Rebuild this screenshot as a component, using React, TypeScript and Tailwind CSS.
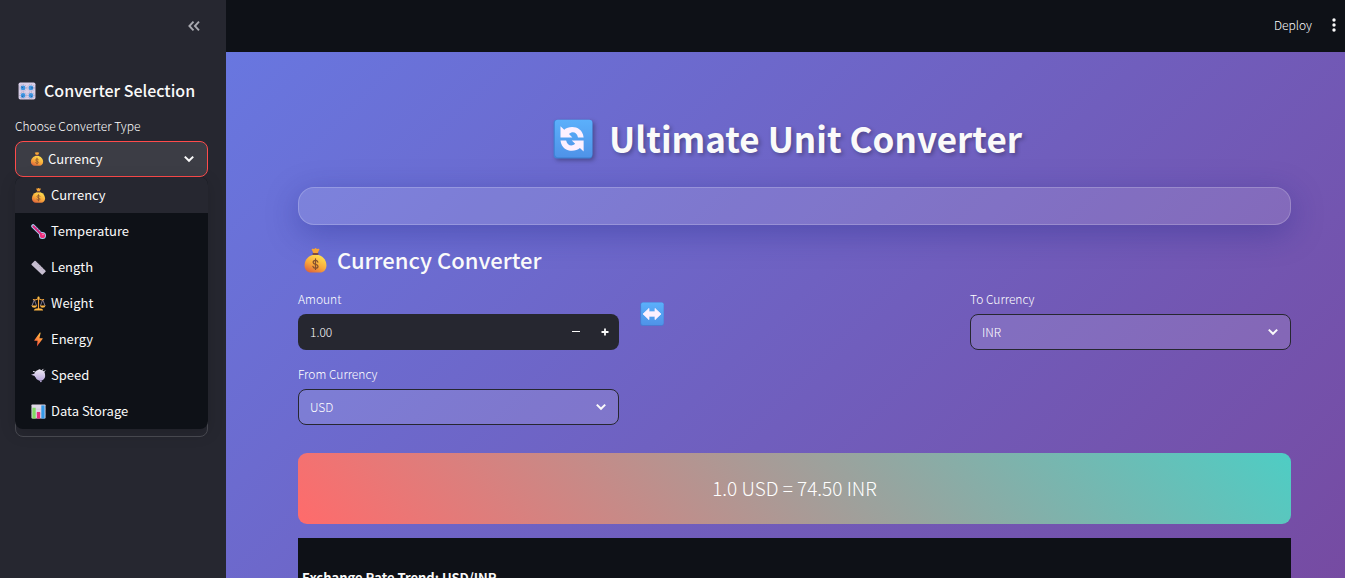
import { useState } from "react";
import type { ReactNode } from "react";

function Svg({ className, children }: { className: string; children: ReactNode }) {
  return (
    <svg viewBox="0 0 32 32" className={`shrink-0 ${className}`} aria-hidden="true">
      {children}
    </svg>
  );
}

function MoneyBag({ className }: { className: string }) {
  return (
    <Svg className={className}>
      <defs>
        <linearGradient id="bag" x1="0.8" y1="0.1" x2="0.3" y2="1">
          <stop offset="0" stopColor="#ffdc4e" />
          <stop offset="0.55" stopColor="#f9a83a" />
          <stop offset="1" stopColor="#e0693c" />
        </linearGradient>
      </defs>
      <path d="M11 1.500c1.500-1.300 2.600.5 3.800-.6 1-1 1.600-1 2.600 0 1.200 1.100 2.300-.7 3.700.600L18.500 7h-5z" fill="#f7a436" />
      <path d="M12 9C5 11 2 17 2 22.500 2 28 6 31.500 10 31.500h12c4 0 8-3.500 8-9C30 17 27 11 20 9z" fill="url(#bag)" />
      <rect x="12" y="6.500" width="8" height="2.400" rx="1.200" fill="#7b4b43" />
      <path d="M19 18c-.5-1.600-1.600-2.200-3-2.200-1.800 0-3 1-3 2.600 0 3.400 6.200 1.800 6.200 5 0 1.700-1.300 2.600-3.200 2.600s-3-.9-3.300-2.400M16 14v13.500" fill="none" stroke="#85502f" strokeWidth="1.600" strokeLinecap="round" />
    </Svg>
  );
}

function Knobs({ className }: { className: string }) {
  return (
    <Svg className={className}>
      <rect x="1" y="1" width="30" height="30" rx="3" fill="#d9cfe8" />
      <g fill="none" stroke="#a295b5" strokeWidth="1.500" strokeDasharray="1.500 2">
        <circle cx="9" cy="10.500" r="6" />
        <circle cx="23" cy="10.500" r="6" />
        <circle cx="9" cy="24" r="6" />
        <circle cx="23" cy="24" r="6" />
      </g>
      <g fill="#3f94e0">
        <circle cx="9" cy="10.500" r="4.300" />
        <circle cx="23" cy="10.500" r="4.300" />
        <circle cx="9" cy="24" r="4.300" />
        <circle cx="23" cy="24" r="4.300" />
      </g>
      <path d="M9 10.500l-3-2M23 10.500h4M9 24l-2 3M23 24l2 3" stroke="#1c5b9e" strokeWidth="1.500" />
    </Svg>
  );
}

function Thermometer({ className }: { className: string }) {
  return (
    <Svg className={className}>
      <path d="M4.500 4.500L24 24" stroke="#a9d3f5" strokeWidth="8" strokeLinecap="round" />
      <circle cx="24.500" cy="24.500" r="7.500" fill="#a9d3f5" />
      <path d="M5 5L24 24" stroke="#e0287d" strokeWidth="4.500" strokeLinecap="round" />
      <circle cx="24.500" cy="24.500" r="5.500" fill="#f0307c" />
      <circle cx="25.500" cy="22.500" r="1.500" fill="#ff9cc4" />
      <path d="M13 7l-3 3M17 11l-3 3M21 15l-3 3" stroke="#5b3f91" strokeWidth="1.500" />
    </Svg>
  );
}

function Ruler({ className }: { className: string }) {
  return (
    <Svg className={className}>
      <path d="M1 8.500L8 1.500Q9 1 10 2L31 23q.8 1 0 2l-6 6q-1 .8-2 0L1.500 10.500Q.5 9.500 1 8.500z" fill="#c6bed0" />
      <path d="M12 4l-3 3M16 8l-3 3M20 12l-3 3M24 16l-3 3M28 20l-3 3" stroke="#aaa0b8" strokeWidth="1.200" />
    </Svg>
  );
}

function Scales({ className }: { className: string }) {
  return (
    <Svg className={className}>
      <path d="M7 8L2 21M7 8l5 13M25 8l-5 13M25 8l5 13" stroke="#a79ab5" strokeWidth="1.600" />
      <path d="M5 7.500q5 2.500 11-2.500 6 5 11 2.500" fill="none" stroke="#f7a83c" strokeWidth="2.200" strokeLinecap="round" />
      <path d="M16 3v24" stroke="#f3a23c" strokeWidth="2.400" strokeLinecap="round" />
      <circle cx="16" cy="3.500" r="2.300" fill="#ffc247" />
      <path d="M1 20h12q-1 5-6 5t-6-5zM19 20h12q-1 5-6 5t-6-5zM6 31q1-5 10-5t10 5z" fill="#fbb441" />
    </Svg>
  );
}

function Bolt({ className }: { className: string }) {
  return (
    <Svg className={className}>
      <defs>
        <linearGradient id="bolt" x1="0.7" y1="0" x2="0.3" y2="1">
          <stop offset="0" stopColor="#ffc044" />
          <stop offset="0.5" stopColor="#ff8b3d" />
          <stop offset="1" stopColor="#f0433d" />
        </linearGradient>
      </defs>
      <path d="M19 1L7 17.500q-.5 1 .6 1H14L12.500 31 25 14.500q.5-1-.6-1H18L20.500 2q0-1.500-1.500-1z" fill="url(#bolt)" />
    </Svg>
  );
}

function Puff({ className }: { className: string }) {
  return (
    <Svg className={className}>
      <defs>
        <linearGradient id="puff" x1="0.5" y1="0" x2="0.4" y2="1">
          <stop offset="0" stopColor="#efeaf5" />
          <stop offset="1" stopColor="#b7a5da" />
        </linearGradient>
      </defs>
      <path d="M0 14.500l7-2.500C9 8 11 5 15 4c2-2 5-2 6 0 5 0 9 4 9 10 1 6-1 9-4 11-3 3-7 3-10 1-3-1-5-3-6-6-2-1-2-2-2-3z" fill="url(#puff)" />
      <path d="M9 8.500l-4-1M24 4.500l2-2M27.500 8l2.500-2" stroke="#e9e4f2" strokeWidth="2" strokeLinecap="round" />
      <circle cx="21" cy="28.500" r="2" fill="#a99bc7" />
    </Svg>
  );
}

function Bars({ className }: { className: string }) {
  return (
    <Svg className={className}>
      <rect x="1" y="1" width="30" height="30" rx="1.500" fill="#ded6e6" />
      <path d="M1 11h30M1 21h30" stroke="#bdb3cb" strokeWidth="1" />
      <rect x="3" y="8" width="7" height="23" fill="#7fdc62" />
      <rect x="12.500" y="17" width="7" height="14" fill="#e5307f" />
      <rect x="22" y="3" width="7" height="28" fill="#359bea" />
    </Svg>
  );
}

function BlueTile({ className, children }: { className: string; children: ReactNode }) {
  return (
    <Svg className={className}>
      <defs>
        <linearGradient id="tile" x1="0" y1="0" x2="0" y2="1">
          <stop offset="0" stopColor="#5bb0fb" />
          <stop offset="1" stopColor="#4f93e8" />
        </linearGradient>
      </defs>
      <rect x="0.500" y="0.500" width="31" height="31" rx="2.500" fill="#3f83d6" />
      <rect x="1.500" y="0.500" width="30" height="30" rx="2.500" fill="url(#tile)" />
      {children}
    </Svg>
  );
}

function Chevron({ className }: { className: string }) {
  return (
    <svg viewBox="0 0 12 8" aria-hidden="true" className={`pointer-events-none h-2 w-3 ${className}`}>
      <path d="M1.800 1.600L6 5.800l4.200-4.200" fill="none" stroke="#fafafa" strokeWidth="2" />
    </svg>
  );
}

const converters = [
  { name: "Currency", Icon: MoneyBag },
  { name: "Temperature", Icon: Thermometer },
  { name: "Length", Icon: Ruler },
  { name: "Weight", Icon: Scales },
  { name: "Energy", Icon: Bolt },
  { name: "Speed", Icon: Puff },
  { name: "Data Storage", Icon: Bars },
];

const HALF_TURN_ARROW = "M6 5.800L9 8.600C13 4.800 23.500 5.200 24.500 14.700H20C19 10.500 15.500 9.500 12.800 12L15.500 14.700H6z";

function Sidebar() {
  const [selected, setSelected] = useState("Currency");
  const current = converters.find((c) => c.name === selected) ?? converters[0];
  return (
    <aside className="flex w-[226px] shrink-0 flex-col bg-[#262730] pr-[18px] pl-[15px]">
      <div className="flex h-[52px] items-center justify-end pr-2">
        <button type="button" aria-label="Collapse sidebar" className="text-[#a8a9af]">
          <svg viewBox="0 0 12 10" className="h-[10px] w-3" fill="none" stroke="currentColor" strokeWidth="1.900" aria-hidden="true">
            <path d="M5.500 0.700L1.400 5l4.100 4.300M11 0.700L6.900 5 11 9.300" />
          </svg>
        </button>
      </div>
      <h2 className="mt-6 flex h-[30px] items-center gap-2 pl-[3px] text-[16px] font-medium whitespace-nowrap">
        <Knobs className="size-[18px]" />
        <span className="pb-[2px]">Converter Selection</span>
      </h2>
      <label htmlFor="type" className="mt-3 flex h-4 items-center text-[12px] font-light text-white">
        Choose Converter Type
      </label>
      <div className="relative mt-[7px]">
        <button
          id="type"
          type="button"
          aria-haspopup="listbox"
          aria-expanded="true"
          className="flex h-9 w-full items-center gap-1 rounded-lg border border-[#ff4b4b] bg-[#3c3d45] pr-3 pl-[14px] text-[13px]"
        >
          <current.Icon className="size-[14px]" />
          <span className="flex-1 text-left">{current.name}</span>
          <Chevron className="" />
        </button>
        <ul
          role="listbox"
          aria-label="Choose Converter Type"
          className="absolute inset-x-0 top-full z-10 overflow-hidden rounded-lg bg-[#0e1117] shadow-[0_4px_16px_rgba(0,0,0,0.16)]"
        >
          {converters.map(({ name, Icon }) => (
            <li
              key={name}
              role="option"
              aria-selected={name === selected}
              onClick={() => setSelected(name)}
              className={`flex h-9 cursor-pointer items-center gap-[5px] pl-4 text-[13px] ${name === selected ? "bg-[#262730]" : ""}`}
            >
              <Icon className="size-[15px]" />
              {name}
            </li>
          ))}
        </ul>
      </div>
      <div className="mt-4 h-[244px] rounded-lg border border-[#4a4b53]" />
    </aside>
  );
}

function SelectField({ id, label, options }: { id: string; label: string; options: string[] }) {
  return (
    <div>
      <label htmlFor={id} className="flex h-4 items-center text-[12px] font-light text-white">
        {label}
      </label>
      <div className="relative mt-[7px] flex items-center">
        <select
          id={id}
          className="h-9 w-full appearance-none rounded-lg border border-[#262730] bg-white/12 pr-8 pl-[11px] text-[12px] font-light text-white"
        >
          {options.map((o) => (
            <option key={o} className="bg-[#0e1117]">
              {o}
            </option>
          ))}
        </select>
        <Chevron className="absolute right-3" />
      </div>
    </div>
  );
}

export default function App() {
  const [amount, setAmount] = useState(1);
  return (
    <div className="flex h-screen overflow-hidden bg-linear-[135deg,#667eea_0%,#764ba2_100%] font-['Noto_Sans_CJK_SC','Noto_Sans',sans-serif] text-[#fafafa]">
      <Sidebar />
      <div className="flex min-w-0 flex-1 flex-col">
        <header className="flex h-[52px] shrink-0 items-center justify-end gap-5 bg-[#0e1117] pr-[9px] pb-[2px]">
          <button type="button" className="text-[12px] font-light text-white">
            Deploy
          </button>
          <button type="button" aria-label="Main menu">
            <svg viewBox="0 0 4 14" className="h-[14px] w-1" fill="#fafafa" aria-hidden="true">
              <circle cx="2" cy="2" r="1.700" />
              <circle cx="2" cy="7" r="1.700" />
              <circle cx="2" cy="12" r="1.700" />
            </svg>
          </button>
        </header>
        <main className="min-h-0 flex-1 overflow-y-auto pt-16 pr-[54px] pl-[72px] [scrollbar-width:none]">
          <h1 className="flex h-[46px] items-center justify-center gap-4 pr-[14px] text-[35px] font-bold whitespace-nowrap text-shadow-[2px_2px_4px_rgba(0,0,0,0.3)]">
            <BlueTile className="size-10 drop-shadow-[2px_2px_2px_rgba(0,0,0,0.3)]">
              <g fill="#fdf0ff">
                <path d={HALF_TURN_ARROW} />
                <path d={HALF_TURN_ARROW} transform="rotate(180 15.250 15.900)" />
              </g>
            </BlueTile>
            <span className="pb-[2px]">Ultimate Unit Converter</span>
          </h1>
          <div className="mt-[25px] h-[38px] rounded-2xl border border-white/20 bg-white/12 shadow-[0_8px_32px_rgba(31,38,135,0.37)]" />
          <h2 className="mt-[17px] flex h-9 items-center gap-[9px] pl-[5px] text-[22px] font-medium">
            <MoneyBag className="size-[25px]" />
            <span className="pb-[2px]">Currency Converter</span>
          </h2>
          <div className="mt-[13px] grid grid-cols-3 gap-[15px]">
            <div className="flex flex-col gap-4">
              <div>
                <label htmlFor="amount" className="flex h-4 items-center text-[12px] font-light text-white">
                  Amount
                </label>
                <div className="mt-[7px] flex h-9 items-center rounded-lg bg-[#262730] pl-3">
                  <input
                    id="amount"
                    value={amount.toFixed(2)}
                    onChange={(e) => setAmount(Number(e.target.value) || 0)}
                    className="min-w-0 flex-1 bg-transparent text-[12px] font-light text-white outline-none"
                  />
                  <button type="button" aria-label="Decrease" onClick={() => setAmount(amount - 1)} className="flex h-9 w-[29px] items-center justify-center">
                    <svg viewBox="0 0 8 8" className="size-2" aria-hidden="true">
                      <path d="M0 3.500h8" stroke="#fafafa" />
                    </svg>
                  </button>
                  <button type="button" aria-label="Increase" onClick={() => setAmount(amount + 1)} className="flex h-9 w-[29px] items-center justify-center">
                    <svg viewBox="0 0 8 8" className="size-2" aria-hidden="true">
                      <path d="M0.500 4h7M4 0.500v7" stroke="#fafafa" strokeWidth="1.800" />
                    </svg>
                  </button>
                </div>
              </div>
              <SelectField id="from" label="From Currency" options={["USD", "INR", "EUR"]} />
            </div>
            <div className="pt-[11px] pl-[6px]">
              <BlueTile className="size-6">
                <path d="M4 16l8-7.500V13h8V8.500L28 16l-8 7.500V19h-8v4.500z" fill="#fdf0ff" stroke="#fdf0ff" strokeWidth="1" strokeLinejoin="round" />
              </BlueTile>
            </div>
            <SelectField id="to" label="To Currency" options={["INR", "USD", "EUR"]} />
          </div>
          <div className="mt-7 flex h-[71px] items-center justify-center rounded-[9px] bg-linear-[45deg,#ff6b6b,#4ecdc4] text-[19px] font-light text-white">
            1.0 USD = 74.50 INR
          </div>
          <section className="mt-[14px] h-96 bg-[#0e1117] px-1 pt-7">
            <h3 className="text-[13px] leading-6 font-bold">Exchange Rate Trend: USD/INR</h3>
          </section>
        </main>
      </div>
    </div>
  );
}
